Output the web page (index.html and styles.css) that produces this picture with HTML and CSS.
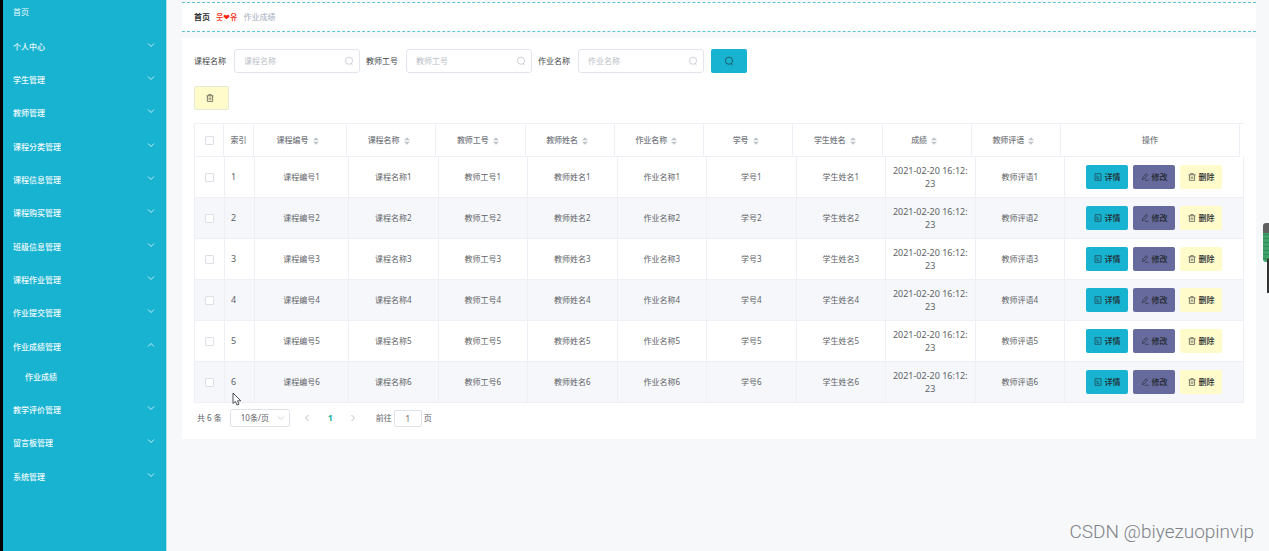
FILE: index.html
```html
<!DOCTYPE html>
<html lang="zh-CN">
<head>
<meta charset="utf-8">
<title>作业成绩</title>
<link rel="stylesheet" href="styles.css">
</head>
<body>
<svg class="sprite" aria-hidden="true">
  <symbol id="down" viewBox="0 0 8 8"><path d="M1 2.5 4 5.5 7 2.5"/></symbol>
  <symbol id="up" viewBox="0 0 8 8"><path d="M1 5.5 4 2.5 7 5.5"/></symbol>
  <symbol id="left" viewBox="0 0 8 8"><path d="M5.5 1 2.5 4 5.5 7"/></symbol>
  <symbol id="right" viewBox="0 0 8 8"><path d="M2.5 1 5.5 4 2.5 7"/></symbol>
  <symbol id="search" viewBox="0 0 10 10"><circle cx="5" cy="4.7" r="3.6"/><path d="M7 7.6 8.6 9"/></symbol>
  <symbol id="trash" viewBox="0 0 8 8"><path d="M.5 1.8H7.5M2.7 1.6V.6H5.3V1.6M1.4 2V7.4H6.6V2M3.2 3.5V5.8M4.8 3.5V5.8"/></symbol>
  <symbol id="doc" viewBox="0 0 8 8"><path d="M1 .7H7V7.3H1ZM3 2.4V5.6H5.2M4.6 3.2V4.2"/></symbol>
  <symbol id="edit" viewBox="0 0 8 8"><path d="M5 .7 6.5 1.8 3.4 6 1.4 6.7 1.6 4.8ZM4 7.3H7.5"/></symbol>
  <symbol id="sort" viewBox="0 0 6 8"><path d="M0 3.2 3 .2 6 3.2ZM0 4.8 3 7.8 6 4.8Z"/></symbol>
</svg>
<div class="app">
  <nav class="sidebar">
    <a class="home" href="#">首页</a>
    <ul class="menu">
      <li><a href="#">个人中心<svg class="icon"><use href="#down"/></svg></a></li>
      <li><a href="#">学生管理<svg class="icon"><use href="#down"/></svg></a></li>
      <li><a href="#">教师管理<svg class="icon"><use href="#down"/></svg></a></li>
      <li><a href="#">课程分类管理<svg class="icon"><use href="#down"/></svg></a></li>
      <li><a href="#">课程信息管理<svg class="icon"><use href="#down"/></svg></a></li>
      <li><a href="#">课程购买管理<svg class="icon"><use href="#down"/></svg></a></li>
      <li><a href="#">班级信息管理<svg class="icon"><use href="#down"/></svg></a></li>
      <li><a href="#">课程作业管理<svg class="icon"><use href="#down"/></svg></a></li>
      <li><a href="#">作业提交管理<svg class="icon"><use href="#down"/></svg></a></li>
      <li><a href="#">作业成绩管理<svg class="icon"><use href="#up"/></svg></a><a class="sub" href="#">作业成绩</a></li>
      <li><a href="#">教学评价管理<svg class="icon"><use href="#down"/></svg></a></li>
      <li><a href="#">留言板管理<svg class="icon"><use href="#down"/></svg></a></li>
      <li><a href="#">系统管理<svg class="icon"><use href="#down"/></svg></a></li>
    </ul>
  </nav>
  <main class="main">
    <div class="crumbs"><a href="#">首页</a><span class="sep">웃❤유</span><span class="current">作业成绩</span></div>
    <section class="panel">
      <form class="filters">
        <label for="course">课程名称</label>
        <span class="field"><input id="course" type="text" placeholder="课程名称"><svg class="icon"><use href="#search"/></svg></span>
        <label for="teacher">教师工号</label>
        <span class="field"><input id="teacher" type="text" placeholder="教师工号"><svg class="icon"><use href="#search"/></svg></span>
        <label for="work">作业名称</label>
        <span class="field"><input id="work" type="text" placeholder="作业名称"><svg class="icon"><use href="#search"/></svg></span>
        <button class="btn detail query" type="button" aria-label="搜索"><svg class="icon"><use href="#search"/></svg></button>
      </form>
      <button class="btn remove bulk" type="button" aria-label="删除"><svg class="icon"><use href="#trash"/></svg></button>
      <div class="grid">
        <table class="head">
          <colgroup><col class="c-check"><col class="c-index"><col class="c-code"><col span="8"><col class="c-action"></colgroup>
          <thead><tr>
            <th><input type="checkbox" aria-label="全选"></th><th>索引</th>
            <th>课程编号<svg class="sort"><use href="#sort"/></svg></th>
            <th>课程名称<svg class="sort"><use href="#sort"/></svg></th>
            <th>教师工号<svg class="sort"><use href="#sort"/></svg></th>
            <th>教师姓名<svg class="sort"><use href="#sort"/></svg></th>
            <th>作业名称<svg class="sort"><use href="#sort"/></svg></th>
            <th>学号<svg class="sort"><use href="#sort"/></svg></th>
            <th>学生姓名<svg class="sort"><use href="#sort"/></svg></th>
            <th>成绩<svg class="sort"><use href="#sort"/></svg></th>
            <th>教师评语<svg class="sort"><use href="#sort"/></svg></th>
            <th>操作</th>
          </tr></thead>
        </table>
        <table class="body">
          <colgroup><col class="c-check"><col class="c-index"><col class="c-code"><col span="8"><col class="c-action"></colgroup>
          <tbody>
            <tr><td><input type="checkbox" aria-label="选择1"></td><td class="num">1</td><td>课程编号1</td><td>课程名称1</td><td>教师工号1</td><td>教师姓名1</td><td>作业名称1</td><td>学号1</td><td>学生姓名1</td><td class="date">2021-02-20 16:12:<br>23</td><td>教师评语1</td><td><div class="actions"><button class="btn detail"><svg class="icon"><use href="#doc"/></svg>详情</button><button class="btn edit"><svg class="icon"><use href="#edit"/></svg>修改</button><button class="btn remove"><svg class="icon"><use href="#trash"/></svg>删除</button></div></td></tr>
            <tr><td><input type="checkbox" aria-label="选择2"></td><td class="num">2</td><td>课程编号2</td><td>课程名称2</td><td>教师工号2</td><td>教师姓名2</td><td>作业名称2</td><td>学号2</td><td>学生姓名2</td><td class="date">2021-02-20 16:12:<br>23</td><td>教师评语2</td><td><div class="actions"><button class="btn detail"><svg class="icon"><use href="#doc"/></svg>详情</button><button class="btn edit"><svg class="icon"><use href="#edit"/></svg>修改</button><button class="btn remove"><svg class="icon"><use href="#trash"/></svg>删除</button></div></td></tr>
            <tr><td><input type="checkbox" aria-label="选择3"></td><td class="num">3</td><td>课程编号3</td><td>课程名称3</td><td>教师工号3</td><td>教师姓名3</td><td>作业名称3</td><td>学号3</td><td>学生姓名3</td><td class="date">2021-02-20 16:12:<br>23</td><td>教师评语3</td><td><div class="actions"><button class="btn detail"><svg class="icon"><use href="#doc"/></svg>详情</button><button class="btn edit"><svg class="icon"><use href="#edit"/></svg>修改</button><button class="btn remove"><svg class="icon"><use href="#trash"/></svg>删除</button></div></td></tr>
            <tr><td><input type="checkbox" aria-label="选择4"></td><td class="num">4</td><td>课程编号4</td><td>课程名称4</td><td>教师工号4</td><td>教师姓名4</td><td>作业名称4</td><td>学号4</td><td>学生姓名4</td><td class="date">2021-02-20 16:12:<br>23</td><td>教师评语4</td><td><div class="actions"><button class="btn detail"><svg class="icon"><use href="#doc"/></svg>详情</button><button class="btn edit"><svg class="icon"><use href="#edit"/></svg>修改</button><button class="btn remove"><svg class="icon"><use href="#trash"/></svg>删除</button></div></td></tr>
            <tr><td><input type="checkbox" aria-label="选择5"></td><td class="num">5</td><td>课程编号5</td><td>课程名称5</td><td>教师工号5</td><td>教师姓名5</td><td>作业名称5</td><td>学号5</td><td>学生姓名5</td><td class="date">2021-02-20 16:12:<br>23</td><td>教师评语5</td><td><div class="actions"><button class="btn detail"><svg class="icon"><use href="#doc"/></svg>详情</button><button class="btn edit"><svg class="icon"><use href="#edit"/></svg>修改</button><button class="btn remove"><svg class="icon"><use href="#trash"/></svg>删除</button></div></td></tr>
            <tr><td><input type="checkbox" aria-label="选择6"></td><td class="num">6</td><td>课程编号6</td><td>课程名称6</td><td>教师工号6</td><td>教师姓名6</td><td>作业名称6</td><td>学号6</td><td>学生姓名6</td><td class="date">2021-02-20 16:12:<br>23</td><td>教师评语6</td><td><div class="actions"><button class="btn detail"><svg class="icon"><use href="#doc"/></svg>详情</button><button class="btn edit"><svg class="icon"><use href="#edit"/></svg>修改</button><button class="btn remove"><svg class="icon"><use href="#trash"/></svg>删除</button></div></td></tr>
          </tbody>
        </table>
      </div>
      <div class="pager">
        <span>共 6 条</span>
        <span class="size"><select aria-label="每页条数"><option>10条/页</option></select><svg class="icon"><use href="#down"/></svg></span>
        <div class="pages">
          <button type="button" aria-label="上一页"><svg class="icon"><use href="#left"/></svg></button>
          <button class="active" type="button">1</button>
          <button type="button" aria-label="下一页"><svg class="icon"><use href="#right"/></svg></button>
        </div>
        <span class="jump"><label for="page">前往</label><input id="page" type="text" value="1"><span>页</span></span>
      </div>
    </section>
  </main>
</div>
<svg class="cursor" viewBox="0 0 10 14" aria-hidden="true"><path d="M1 1V11.5L3.4 9.4 5 13 7 12.2 5.5 8.8H8.8Z"/></svg>
<div class="meter" aria-hidden="true"></div>
<div class="meter-line" aria-hidden="true"></div>
<div class="watermark">CSDN @biyezuopinvip</div>
</body>
</html>
```
FILE: styles.css
```css
* { box-sizing: border-box; }
body {
  margin: 0;
  background: #f6f8fa;
  color: #606266;
  font: 8px/12px "Noto Sans", "Noto Sans CJK SC", sans-serif;
  overflow: hidden;
}
a { color: inherit; text-decoration: none; }
button, input, select { font: inherit; color: inherit; margin: 0; }
.sprite { position: absolute; width: 0; height: 0; }
.icon { width: 8px; height: 8px; flex: none; fill: none; stroke: currentColor; stroke-width: 0.8; }
.app { display: flex; min-height: 100vh; }

.sidebar {
  flex: none;
  width: 167px;
  border-left: 3px solid #000;
  border-right: 1px solid #b5e3ec;
  background: #17b3d1;
  color: #f0fafc;
  font-weight: 500;
}
.home { display: block; padding: 0 10px 6px; line-height: 24px; font-weight: 400; }
.menu { list-style: none; margin: 0; padding: 0; }
.menu li:nth-child(3n) { margin-bottom: 1px; }
.menu a { display: flex; justify-content: space-between; padding: 0 11px 0 10px; line-height: 33px; }
.menu .icon { margin-top: 11px; }
.menu a.sub { padding: 0 22px 3px; line-height: 27px; }

.main { flex: 1; min-width: 0; padding: 2px 13px 0 15px; }
.crumbs {
  display: flex;
  align-items: center;
  gap: 6px;
  height: 30px;
  padding: 0 12px;
  background: #fff;
  border-top: 1px dashed #5cc3d8;
  border-bottom: 1px dashed #5cc3d8;
  color: #303133;
  font-weight: 700;
}
.crumbs .sep { color: #f8240c; font-family: "Noto Sans CJK KR", "DejaVu Sans", sans-serif; font-weight: 500; }
.crumbs .current { color: #a3aebd; font-weight: 400; }

.panel { margin-top: 6px; padding: 11px 12px 12px; background: #fff; }
.filters { display: flex; align-items: center; gap: 6px; color: #404346; }
.filters label { width: 34px; white-space: nowrap; }
.field { display: flex; align-items: center; width: 126px; height: 24px; padding: 0 5px 0 9px; border: 1px solid #e2e5ec; border-radius: 3px; }
.field input { flex: 1; min-width: 0; padding: 0; border: 0; outline: 0; background: none; }
.field input::placeholder { color: #b8bdc7; }
.field .icon { width: 10px; height: 10px; color: #c0c4cc; }
.btn {
  display: flex;
  align-items: center;
  justify-content: center;
  gap: 3px;
  width: 42px;
  height: 24px;
  padding: 0;
  border: 1px solid transparent;
  border-radius: 2px;
  color: #23282c;
  font-weight: 500;
}
.btn .icon { opacity: 0.75; }
.detail { background: #17b3d1; }
.edit { background: #666a9c; }
.remove { background: #fffbcb; }
.query { width: 36px; margin-left: 1px; }
.query .icon { width: 10px; height: 10px; }
.bulk { width: 35px; margin: 13px 0; padding-right: 4px; border-color: #e8e8d8; }

table { table-layout: fixed; border-collapse: separate; border-spacing: 0; }
.grid { border-top: 1px solid #eef0f5; border-left: 1px solid #eef0f5; }
.head { width: calc(100% - 4px); }
.body { width: 100%; }
th, td { padding: 0; border-right: 1px solid #eef0f5; border-bottom: 1px solid #eef0f5; text-align: center; font-weight: 400; white-space: nowrap; }
th { height: 33px; color: #777b82; font-weight: 500; }
td { height: 41px; }
.c-check, .c-index { width: 30px; }
.c-check { width: 29px; }
.c-code { width: 93px; }
.c-action { width: 179px; }
.body .c-check { width: 30px; }
.body .c-code { width: 94px; }
.body tr:nth-child(even) { background: #f5f7fa; }
.num { padding-left: 6px; text-align: left; font-size: 9px; }
.date { font-size: 9px; line-height: 13px; }
.sort { width: 6px; height: 8px; margin: 0 5px 0 4px; vertical-align: middle; fill: #c0c4cc; }
input[type="checkbox"] { appearance: none; display: block; width: 9px; height: 9px; margin: 0 auto; border: 1px solid #dcdfe6; border-radius: 1px; background: #fff; }
.actions { display: flex; justify-content: center; gap: 5px; }

.pager { display: flex; align-items: center; padding: 6px 3px 0; }
.size { display: flex; align-items: center; width: 60px; height: 18px; margin-left: 8px; padding-right: 4px; border: 1px solid #dfe3ea; border-radius: 2px; }
.size select { flex: 1; min-width: 0; padding: 0 0 0 10px; appearance: none; border: 0; background: none; }
.size .icon { color: #c0c4cc; }
.pages { display: flex; margin-left: 6px; }
.pages button { display: flex; align-items: center; justify-content: center; width: 23px; height: 18px; padding: 0; border: 0; background: none; color: #a8abb2; }
.pages .active { color: #17b39a; font-weight: 700; font-size: 9px; }
.jump { display: flex; align-items: center; gap: 2px; margin-left: 11px; }
.jump input { width: 28px; height: 17px; padding: 0; border: 1px solid #dfe3ea; border-radius: 2px; text-align: center; }

.cursor { position: absolute; left: 232px; top: 392px; width: 10px; height: 14px; fill: #fff; stroke: #4c4f55; }
.meter { position: absolute; right: 0; top: 223px; width: 6px; height: 39px; border-radius: 3px 0 0 3px; background: linear-gradient(#606060 10px, transparent 10px), repeating-linear-gradient(#3fa269 0 3px, #33895a 3px 4px); }
.meter-line { position: absolute; right: 0; top: 259px; width: 2px; height: 34px; background: #333; }
.watermark { position: absolute; right: 15px; bottom: 8px; color: #808387; font: 300 19px/22px Roboto, "Liberation Sans", sans-serif; }
```
